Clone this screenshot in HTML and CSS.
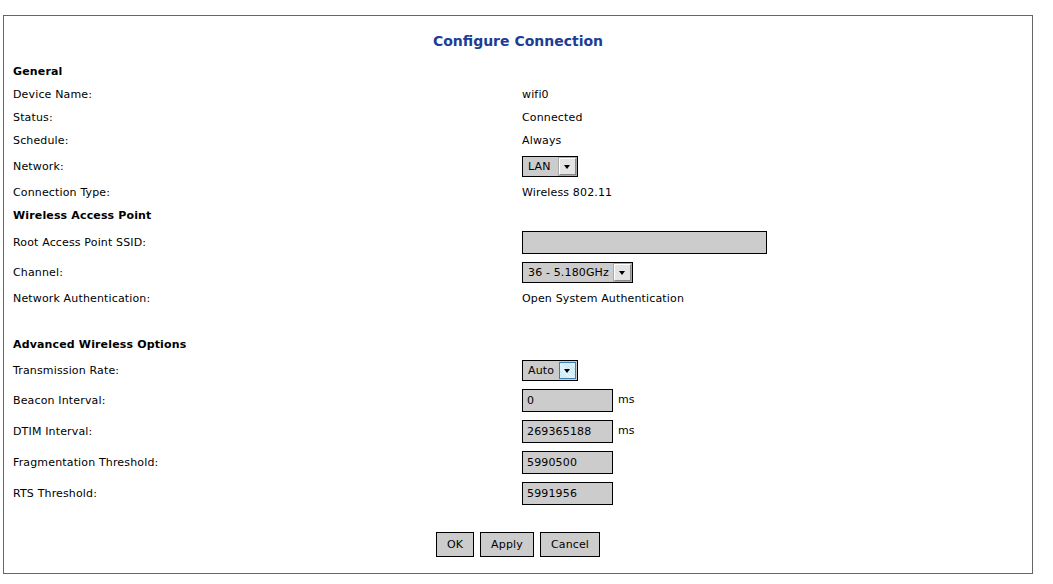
FILE: index.html
```html
<!DOCTYPE html>
<html lang="en">
<head>
    <meta charset="UTF-8">
    <title>Configure Connection</title>
    <link rel="stylesheet" href="styles.css">
</head>
<body>
    <div class="panel">
        <h1 class="title">Configure Connection</h1>

        <div class="form">
            <div class="row section">General</div>
            <div class="row"><span class="label">Device Name:</span><span class="value">wifi0</span></div>
            <div class="row"><span class="label">Status:</span><span class="value">Connected</span></div>
            <div class="row"><span class="label">Schedule:</span><span class="value">Always</span></div>
            <div class="row row-select">
                <span class="label">Network:</span>
                <span class="value"><span class="select w-56">LAN<span class="arrow"></span></span></span>
            </div>
            <div class="row"><span class="label">Connection Type:</span><span class="value">Wireless 802.11</span></div>

            <div class="row section">Wireless Access Point</div>
            <div class="row row-input">
                <span class="label">Root Access Point SSID:</span>
                <span class="value"><input type="text" class="field w-245" value=""></span>
            </div>
            <div class="row row-input">
                <span class="label">Channel:</span>
                <span class="value"><span class="select w-111">36 - 5.180GHz<span class="arrow"></span></span></span>
            </div>
            <div class="row"><span class="label">Network Authentication:</span><span class="value">Open System Authentication</span></div>

            <div class="row"></div>
            <div class="row section">Advanced Wireless Options</div>
            <div class="row row-rate">
                <span class="label">Transmission Rate:</span>
                <span class="value"><span class="select w-56">Auto<span class="arrow hover"></span></span></span>
            </div>
            <div class="row row-num first">
                <span class="label">Beacon Interval:</span>
                <span class="value"><input type="text" class="field" value="0"><span class="unit">ms</span></span>
            </div>
            <div class="row row-num">
                <span class="label">DTIM Interval:</span>
                <span class="value"><input type="text" class="field" value="269365188"><span class="unit">ms</span></span>
            </div>
            <div class="row row-num">
                <span class="label">Fragmentation Threshold:</span>
                <span class="value"><input type="text" class="field" value="5990500"></span>
            </div>
            <div class="row row-num">
                <span class="label">RTS Threshold:</span>
                <span class="value"><input type="text" class="field" value="5991956"></span>
            </div>
        </div>

        <div class="buttons">
            <button type="button" class="btn">OK</button>
            <button type="button" class="btn">Apply</button>
            <button type="button" class="btn">Cancel</button>
        </div>
    </div>
</body>
</html>
```

FILE: styles.css
```css
* {
    margin: 0;
    padding: 0;
    box-sizing: border-box;
}

body {
    font-family: "DejaVu Sans", Verdana, sans-serif;
    font-size: 11px;
    letter-spacing: 0.15px;
    color: #000;
    background: #fff;
}

.panel {
    width: 1030px;
    height: 559px;
    margin: 15px 0 0 3px;
    border: 1px solid #666;
    padding: 0 9px;
}

.title {
    font-size: 14px;
    font-weight: bold;
    letter-spacing: 0;
    color: #1c3c96;
    text-align: center;
    height: 44px;
    padding-top: 17px;
}

.form {
    display: flex;
    flex-direction: column;
}

.row {
    display: flex;
    align-items: center;
    height: 23px;
}

.section {
    font-weight: bold;
}

.label {
    width: 509px;
    flex-shrink: 0;
}

.value {
    display: flex;
    align-items: center;
}

.row-select {
    height: 29px;
}

.row-input {
    height: 30px;
}

.row-rate {
    height: 28px;
}

.row-num {
    height: 31px;
}

.row-num.first {
    height: 32px;
}

/* drop-down look-alike */
.select {
    display: flex;
    align-items: center;
    justify-content: space-between;
    height: 21px;
    border: 1px solid #000;
    background: #ccc;
    padding: 0 1px 0 5px;
}

.w-56 {
    width: 56px;
}

.w-111 {
    width: 111px;
}

.arrow {
    position: relative;
    width: 17px;
    height: 17px;
    background: #e4e4e4;
    border: 1px solid;
    border-color: #fff #888 #888 #fff;
    outline: 1px solid #aaa;
}

.arrow::after {
    content: "";
    position: absolute;
    left: 4px;
    top: 6px;
    border-left: 3.5px solid transparent;
    border-right: 3.5px solid transparent;
    border-top: 4px solid #000;
}

.arrow.hover {
    background: repeating-linear-gradient(45deg, #c6eaf7 0 1px, #e8f7fd 1px 2px);
    border-color: #3c7fb1;
    outline: none;
}

.field {
    width: 91px;
    height: 23px;
    border: 1px solid #000;
    background: #ccc;
    font-family: inherit;
    font-size: 11px;
    letter-spacing: inherit;
    color: #000;
    padding: 0 4px;
}

.w-245 {
    width: 245px;
}

.unit {
    align-self: flex-start;
    margin: 4px 0 0 5px;
}

.buttons {
    display: flex;
    justify-content: center;
    gap: 6px;
    margin-top: 23px;
}

.btn {
    height: 25px;
    padding: 0 10px;
    border: 1px solid #000;
    background: #ccc;
    font-family: inherit;
    font-size: 11px;
    letter-spacing: inherit;
    color: #000;
}
```
